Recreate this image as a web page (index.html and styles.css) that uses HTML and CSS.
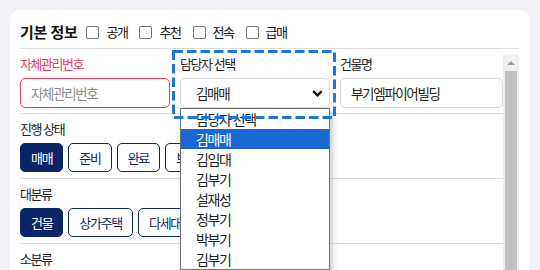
FILE: index.html
```html
<!DOCTYPE html>
<html lang="ko">

<head>
    <meta charset="UTF-8" />
    <title>매물 등록 | 기본 정보</title>
    <link rel="stylesheet" href="styles.css">
</head>

<body>
    <div class="card">
        <div class="card-head">
            <h2 class="title">기본 정보</h2>
            <label class="check"><span class="box"></span>공개</label>
            <label class="check"><span class="box"></span>추천</label>
            <label class="check"><span class="box"></span>전속</label>
            <label class="check"><span class="box"></span>급매</label>
        </div>

        <div class="card-body">
            <div class="scroll-area">
                <div class="field-row">
                    <div class="field">
                        <div class="label label-error">자체관리번호</div>
                        <input class="input input-error" type="text" placeholder="자체관리번호">
                    </div>
                    <div class="field field-focus">
                        <div class="label">담당자 선택</div>
                        <div class="select">
                            <span>김매매</span>
                            <svg class="chevron" width="11" height="7" viewBox="0 0 11 7">
                                <path d="M1.2 1.2 L5.5 5.3 L9.8 1.2" fill="none" stroke="#111" stroke-width="2.3" />
                            </svg>
                        </div>
                        <ul class="dropdown">
                            <li>담당자 선택</li>
                            <li class="selected">김매매</li>
                            <li>김임대</li>
                            <li>김부기</li>
                            <li>설재성</li>
                            <li>정부기</li>
                            <li>박부기</li>
                            <li>김부기</li>
                        </ul>
                        <!-- highlight ring drawn over the open list -->
                        <svg class="focus-ring" width="164" height="69" viewBox="0 0 164 69">
                            <rect x="1.5" y="1.5" width="161" height="66" fill="none" stroke="#1a73e8"
                                stroke-width="3" stroke-dasharray="9.5 4" />
                        </svg>
                    </div>
                    <div class="field">
                        <div class="label">건물명</div>
                        <input class="input" type="text" value="부기엠파이어빌딩">
                    </div>
                </div>

                <div class="section">
                    <div class="label">진행 상태</div>
                    <div class="chips">
                        <button class="chip active">매매</button>
                        <button class="chip">준비</button>
                        <button class="chip">완료</button>
                        <button class="chip">보류</button>
                    </div>
                </div>

                <div class="section">
                    <div class="label">대분류</div>
                    <div class="chips">
                        <button class="chip active">건물</button>
                        <button class="chip">상가주택</button>
                        <button class="chip">다세대</button>
                    </div>
                </div>

                <div class="section last">
                    <div class="label">소분류</div>
                </div>
            </div>

            <div class="scrollbar">
                <div class="sb-up"><span class="sb-arrow"></span></div>
                <div class="sb-thumb"></div>
            </div>
        </div>
    </div>
</body>

</html>
```

FILE: styles.css
```css
html,
body {
    height: 100%;
    overflow: hidden;
}

body {
    font-family: "Noto Sans CJK KR", "Noto Sans", sans-serif;
    letter-spacing: -0.09em;
    margin: 0;
    padding: 10px;
    box-sizing: border-box;
    background-color: #f1f2f6;
    color: #222;
}

.card {
    background: #fff;
    border-radius: 10px;
    padding: 0 11px 0 10px;
    height: 320px;
}

.card-head {
    display: flex;
    align-items: center;
    height: 39px;
    padding-top: 5px;
    box-sizing: border-box;
    border-bottom: 1px solid #dedede;
}

.title {
    font-size: 15px;
    font-weight: 700;
    margin: 0 9px 0 0;
    color: #111;
    letter-spacing: -0.4px;
}

.check {
    display: flex;
    align-items: center;
    font-size: 13px;
    margin-right: 12px;
    color: #111;
}

.box {
    width: 11px;
    height: 11px;
    border: 1px solid #767676;
    border-radius: 2px;
    margin: 2px 7px 0 0;
}

.card-body {
    display: flex;
}

.scroll-area {
    flex: 1;
}

.label {
    font-size: 13px;
    line-height: 18px;
    margin-bottom: 5px;
    color: #222;
}

.label-error {
    color: #f5365c;
}

.field-row {
    display: grid;
    grid-template-columns: 150px 150px 1fr;
    column-gap: 10px;
    padding: 6px 0 5px;
    border-bottom: 1px solid #dedede;
}

.field-focus {
    position: relative;
}

.focus-ring {
    position: absolute;
    top: -5px;
    left: -8px;
    z-index: 6;
}

.input,
.select {
    width: 100%;
    height: 30px;
    box-sizing: border-box;
    border: 1px solid #dcdcdc;
    border-radius: 5px;
    font-family: inherit;
    font-size: 13.5px;
    letter-spacing: -0.1em;
    color: #222;
    background: #fff;
    margin: 0;
}

.input {
    padding: 0 10px;
}

.input::placeholder {
    color: #8a8a8a;
}

.input-error {
    border-color: #f5365c;
}

.select {
    display: flex;
    align-items: center;
    justify-content: space-between;
    padding: 0 6px 0 15px;
}

.dropdown {
    position: absolute;
    top: 100%;
    left: 0;
    width: 150px;
    box-sizing: border-box;
    margin: 0;
    padding: 0;
    list-style: none;
    background: #fff;
    border: 1px solid #767676;
    box-shadow: 2px 3px 6px rgba(0, 0, 0, 0.25);
    z-index: 5;
}

.dropdown li {
    font-size: 14px;
    line-height: 20px;
    padding: 0 15px;
    color: #222;
}

.dropdown .selected {
    background: #1967d2;
    color: #fff;
}

.section {
    padding: 6px 0;
    border-bottom: 1px solid #dedede;
}

.section.last {
    border-bottom: none;
}

.chips {
    display: flex;
    gap: 5px;
}

.chip {
    height: 29px;
    padding: 0 10px;
    border: 1.5px solid #0b2566;
    border-radius: 5px;
    background: #fff;
    color: #0b2566;
    font-family: inherit;
    font-size: 13px;
    letter-spacing: -0.1em;
}

.chip.active {
    background: #0b2566;
    color: #fff;
}

.scrollbar {
    width: 16px;
    margin-top: 5px;
    background: #f1f1f1;
    display: flex;
    flex-direction: column;
    align-items: center;
}

.sb-up {
    height: 17px;
    display: flex;
    align-items: center;
    justify-content: center;
}

.sb-arrow {
    width: 0;
    height: 0;
    border-left: 4px solid transparent;
    border-right: 4px solid transparent;
    border-bottom: 4px solid #a3a3a3;
}

.sb-thumb {
    width: 12px;
    height: 260px;
    background: #c1c1c1;
}
```
